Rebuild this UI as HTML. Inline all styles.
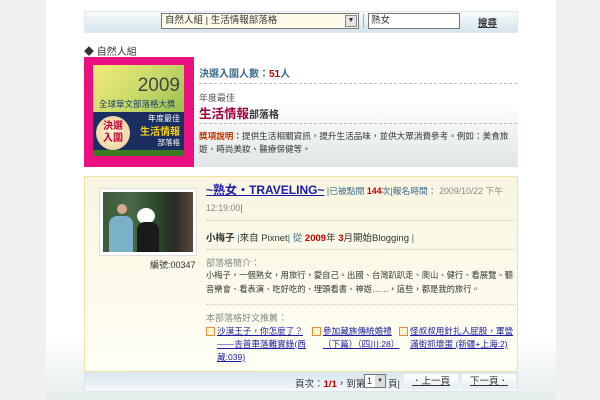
<!DOCTYPE html>
<html><head><meta charset="utf-8"><style>
*{margin:0;padding:0;box-sizing:border-box}
body{width:600px;height:400px;overflow:hidden;background:#f0f0f0;font-family:"Liberation Sans","Noto Sans CJK TC",sans-serif;font-size:9px;color:#333;position:relative}
.a{position:absolute}
.page{left:46px;top:0;width:510px;height:400px;background:linear-gradient(#fff 0,#fff 340px,#e4ecec 400px)}
a{color:#1a1aa6;text-decoration:underline}
.dash{border-top:1px dashed #bbb;height:0}
.dot{border-top:1px dotted #ccc;height:0}
.r{color:#c00000;font-weight:bold}
.g{color:#888}
.b{color:#3a6a8a}
</style></head><body>
<div class="a page"></div>
<div class="a" style="left:84px;top:11px;width:434px;height:22px;background:linear-gradient(#f6fafb,#d6e6ee);border:1px solid #e0e8ec"></div>
<div class="a" style="left:161px;top:13px;width:198px;height:16px;background:#fffbea;border:1px solid #777;font-size:9.5px;line-height:14px;padding-left:3px">自然人組 | 生活情報部落格</div>
<div class="a" style="left:345px;top:15px;width:12px;height:12px;background:#e4e4e4;border:1px solid #888;font-size:7px;text-align:center;line-height:10px">▼</div>
<div class="a" style="left:363px;top:14px;width:1px;height:14px;background:#aaa"></div>
<div class="a" style="left:368px;top:13px;width:92px;height:16px;background:#fff;border:1px solid #777;font-size:9.5px;line-height:14px;padding-left:2px">熟女</div>
<div class="a" style="left:478px;top:15px;font-size:9.5px;font-weight:bold;text-decoration:underline">搜尋</div>

<div class="a" style="left:84px;top:43px;font-size:10px">◆ 自然人組</div>
<div class="a" style="left:84px;top:57px;width:110px;height:110px;background:#e8117f"></div>
<div class="a" style="left:93px;top:65px;width:91px;height:91px;background:linear-gradient(135deg,#f4ea7a,#c8da6a 40%,#7ab040);overflow:hidden">
 <div class="a" style="right:4px;top:10px;font-size:19px;color:#444">2009</div>
 <div class="a" style="left:6px;top:33px;font-size:8.5px;color:#1a3a6a;white-space:nowrap">全球華文部落格大獎</div>
 <div class="a" style="left:0;top:47px;width:91px;height:38px;background:#1a2e60"></div>
 <div class="a" style="left:0;top:85px;width:91px;height:6px;background:#3a7a20"></div>
 <div class="a" style="left:3px;top:51px;width:34px;height:34px;border-radius:50%;background:radial-gradient(#fff6d8,#e8c890);font-size:10px;font-weight:bold;color:#c0003a;text-align:center;line-height:12px;padding-top:5px">決選<br>入圍</div>
 <div class="a" style="right:4px;top:48px;font-size:8px;color:#fff">年度最佳</div>
 <div class="a" style="right:4px;top:58px;font-size:10px;font-weight:bold;color:#f8d020">生活情報</div>
 <div class="a" style="right:4px;top:72px;font-size:7.5px;color:#fff">部落格</div>
</div>
<div class="a" style="left:194px;top:57px;width:324px;height:110px;background:linear-gradient(#fff 40%,#dfe6e6)"></div>
<div class="a b" style="left:199px;top:65px;font-size:10px;font-weight:bold">決選入圍人數：<span class="r">51</span>人</div>
<div class="a dash" style="left:199px;top:83px;width:318px"></div>
<div class="a" style="left:199px;top:91px;font-size:9px;color:#555">年度最佳</div>
<div class="a" style="left:199px;top:103px;font-size:12.5px;font-weight:bold;color:#a0003a">生活情報<span style="font-size:10px;color:#333">部落格</span></div>
<div class="a dash" style="left:199px;top:123px;width:318px"></div>
<div class="a" style="left:199px;top:130px;width:318px;font-size:8.6px;line-height:13px;color:#333"><span style="color:#c03000;font-weight:bold">獎項說明：</span>提供生活相關資訊，提升生活品味，並供大眾消費參考。例如：美食旅遊、時尚美妝、醫療保健等。</div>

<div class="a" style="left:84px;top:176px;width:434px;height:196px;background:linear-gradient(#f8f6e0,#fffef4);border:1px solid #f0e2a0"></div>
<div class="a" style="left:99px;top:188px;width:98px;height:68px;background:#fff;border:1px solid #ddd;padding:3px">
 <div style="width:100%;height:100%;background:linear-gradient(90deg,#3a5a3a,#4a6a4a 30%,#2a4a2a 60%,#2a2a2a 80%,#5a4a3a);position:relative;overflow:hidden">
  <div class="a" style="left:34px;top:16px;width:18px;height:16px;border-radius:50%;background:#fff"></div>
  <div class="a" style="left:34px;top:30px;width:22px;height:32px;background:#1a1a1a;border-radius:8px 8px 0 0"></div>
  <div class="a" style="left:14px;top:12px;width:10px;height:10px;border-radius:50%;background:#d8a890"></div>
  <div class="a" style="left:6px;top:24px;width:24px;height:40px;background:#7ab0c8;border-radius:8px 8px 0 0"></div>
 </div>
</div>
<div class="a" style="left:150px;top:258px;font-size:9px;color:#333">編號:00347</div>
<div class="a" style="left:206px;top:182px;width:310px;line-height:17px;font-size:8.8px" >
<a style="font-size:12px;font-weight:bold">~熟女・TRAVELING~</a> <span class="b">|已被點閱 <span class="r">144</span>次|報名時間：</span> <span class="g">2009/10/22 下午 12:19:00</span><span class="b">|</span></div>
<div class="a dot" style="left:206px;top:220px;width:310px"></div>
<div class="a" style="left:206px;top:230px;font-size:9.5px"><b>小梅子</b> <span class="b">|</span>來自 Pixnet<span class="b">| 從</span> <span class="r">2009</span>年 <span class="r">3</span>月開始Blogging <span class="b">|</span></div>
<div class="a dot" style="left:206px;top:249px;width:310px"></div>
<div class="a g" style="left:206px;top:256px;font-size:9px">部落格簡介：</div>
<div class="a" style="left:206px;top:268px;width:312px;font-size:8.3px;line-height:14px">小梅子，一個熟女，用旅行，愛自己。出國、台灣趴趴走、爬山、健行、看展覽、聽音樂會、看表演、吃好吃的、埋頭看書、神遊……，這些，都是我的旅行。</div>
<div class="a dot" style="left:206px;top:304px;width:310px"></div>
<div class="a g" style="left:206px;top:311px;font-size:9px">本部落格好文推薦：</div>
<div class="a" style="left:206px;top:325px;width:104px;font-size:8.6px;line-height:13px;padding-left:11px"><span class="a" style="left:0;top:2px;width:9px;height:9px;border:1px solid #e09040;background:#fff4d0"></span><a>沙漠王子，你怎麼了？——吉普車落難實錄(西藏:039)</a></div>
<div class="a" style="left:312px;top:325px;width:84px;font-size:8.6px;line-height:13px;padding-left:11px"><span class="a" style="left:0;top:2px;width:9px;height:9px;border:1px solid #e09040;background:#fff4d0"></span><a>參加藏族傳統婚禮（下篇）（四川:28）</a></div>
<div class="a" style="left:399px;top:325px;width:116px;font-size:8.6px;line-height:13px;padding-left:11px"><span class="a" style="left:0;top:2px;width:9px;height:9px;border:1px solid #e09040;background:#fff4d0"></span><a>怪叔叔用針扎人屁股，軍營滿街抓壞蛋 (新疆+上海:2)</a></div>

<div class="a" style="left:84px;top:372px;width:434px;height:20px;background:linear-gradient(#d8e8f0,#f4f8fa);border:1px solid #dde6ea"></div>
<div class="a" style="left:295px;top:376px;font-size:9.5px">頁次：<span class="r">1/1</span>，到第</div>
<div class="a" style="left:364px;top:374px;width:22px;height:14px;background:#fff;border:1px solid #777;font-size:9px;line-height:12px;padding-left:2px">1<span class="a" style="right:0;top:0;width:10px;height:12px;background:#ddd;font-size:6px;text-align:center;line-height:12px">▼</span></div>
<div class="a" style="left:388px;top:376px;font-size:9.5px">頁|</div>
<div class="a" style="left:404px;top:374px;width:54px;height:15px;background:linear-gradient(#fff,#e4eef2);font-size:9.5px;text-align:center;line-height:15px;text-decoration:underline">．上一頁</div>
<div class="a" style="left:462px;top:374px;width:54px;height:15px;background:linear-gradient(#fff,#e4eef2);font-size:9.5px;text-align:center;line-height:15px;text-decoration:underline">下一頁．</div>
</body></html>
